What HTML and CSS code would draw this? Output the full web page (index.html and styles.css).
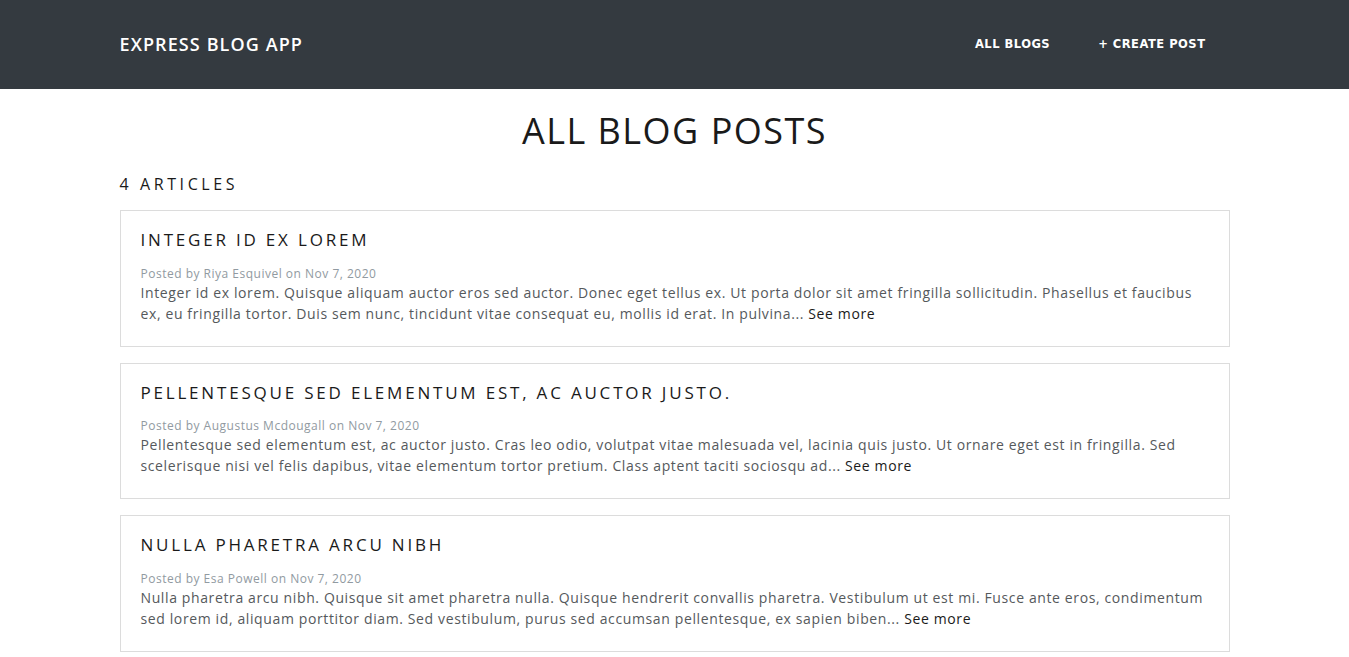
FILE: index.html
```html
<!DOCTYPE html>
<html lang="en">
<head>
<meta charset="utf-8">
<title>Express Blog App</title>
<link rel="stylesheet" href="styles.css">
</head>
<body>
<nav class="navbar">
  <div class="container nav-inner">
    <a class="brand" href="#">EXPRESS BLOG APP</a>
    <ul class="nav-links">
      <li><a href="#">All Blogs</a></li>
      <li><a href="#">+ Create Post</a></li>
    </ul>
  </div>
</nav>
<main class="container">
  <h1 class="page-title">All Blog Posts</h1>
  <h4 class="count">4 Articles</h4>
  <div class="posts">
    <article class="card">
      <h5 class="card-title">Integer id ex lorem</h5>
      <p class="meta">Posted by <span class="author">Riya Esquivel</span> on Nov 7, 2020</p>
      <p class="excerpt">Integer id ex lorem. Quisque aliquam auctor eros sed auctor. Donec eget tellus ex. Ut porta dolor sit amet fringilla sollicitudin. Phasellus et faucibus ex, eu fringilla tortor. Duis sem nunc, tincidunt vitae consequat eu, mollis id erat. In pulvina... <a href="#">See more</a></p>
    </article>
    <article class="card">
      <h5 class="card-title">Pellentesque sed elementum est, ac auctor justo.</h5>
      <p class="meta">Posted by <span class="author">Augustus Mcdougall</span> on Nov 7, 2020</p>
      <p class="excerpt">Pellentesque sed elementum est, ac auctor justo. Cras leo odio, volutpat vitae malesuada vel, lacinia quis justo. Ut ornare eget est in fringilla. Sed scelerisque nisi vel felis dapibus, vitae elementum tortor pretium. Class aptent taciti sociosqu ad... <a href="#">See more</a></p>
    </article>
    <article class="card">
      <h5 class="card-title">Nulla pharetra arcu nibh</h5>
      <p class="meta">Posted by <span class="author">Esa Powell</span> on Nov 7, 2020</p>
      <p class="excerpt">Nulla pharetra arcu nibh. Quisque sit amet pharetra nulla. Quisque hendrerit convallis pharetra. Vestibulum ut est mi. Fusce ante eros, condimentum sed lorem id, aliquam porttitor diam. Sed vestibulum, purus sed accumsan pellentesque, ex sapien biben... <a href="#">See more</a></p>
    </article>
    <article class="card">
      <h5 class="card-title">Fusce ante eros</h5>
      <p class="meta">Posted by <span class="author">Esa Powell</span> on Nov 7, 2020</p>
      <p class="excerpt">Fusce ante eros, condimentum sed lorem id, aliquam porttitor diam. <a href="#">See more</a></p>
    </article>
  </div>
</main>
</body>
</html>
```
FILE: styles.css
```css
* { box-sizing: border-box; }
body {
  margin: 0;
  font-family: "Open Sans", Lato, sans-serif;
  font-size: 14px;
  line-height: 1.5;
  color: #55595c;
  background: #fff;
}
a { text-decoration: none; }
.container {
  width: 1140px;
  margin: 0 auto;
  padding: 0 15px;
}
.navbar {
  background: #343a40;
  height: 89px;
}
.nav-inner {
  height: 100%;
  display: flex;
  align-items: center;
  justify-content: space-between;
}
.brand {
  color: #fff;
  font-family: "Open Sans", sans-serif;
  font-size: 18px;
  font-weight: 600;
  letter-spacing: 1.1px;
}
.nav-links {
  list-style: none;
  margin: 0;
  padding: 0;
  display: flex;
}
.nav-links a {
  display: block;
  padding: 8px 24px;
  color: #fff;
  font-family: "DejaVu Sans", sans-serif;
  font-size: 11.5px;
  font-weight: 700;
  letter-spacing: 0.5px;
  text-transform: uppercase;
}
.page-title {
  margin: 20px 0 0;
  text-align: center;
  font-size: 36px;
  font-weight: 400;
  line-height: 1.2;
  letter-spacing: 1.5px;
  text-transform: uppercase;
  color: #1a1a1a;
}
.count {
  margin: 23px 0 16px;
  font-size: 16px;
  font-weight: 400;
  line-height: 1.2;
  letter-spacing: 3.6px;
  text-transform: uppercase;
  color: #1a1a1a;
}
.posts {
  display: flex;
  flex-direction: column;
  gap: 16px;
}
.card {
  border: 1px solid #dcdcdc;
  padding: 20px 20px 22px;
}
.card-title {
  margin: -1px 0 14px;
  font-size: 17px;
  font-weight: 400;
  line-height: 1.2;
  letter-spacing: 2.8px;
  text-transform: uppercase;
  color: #1a1a1a;
}
.meta {
  margin: 0;
  font-size: 12px;
  line-height: 17px;
  color: #919aa1;
  letter-spacing: 0.5px;
}
.excerpt {
  margin: 0;
  line-height: 21px;
  letter-spacing: 0.62px;
}
.excerpt a { color: #1a1a1a; }
```
